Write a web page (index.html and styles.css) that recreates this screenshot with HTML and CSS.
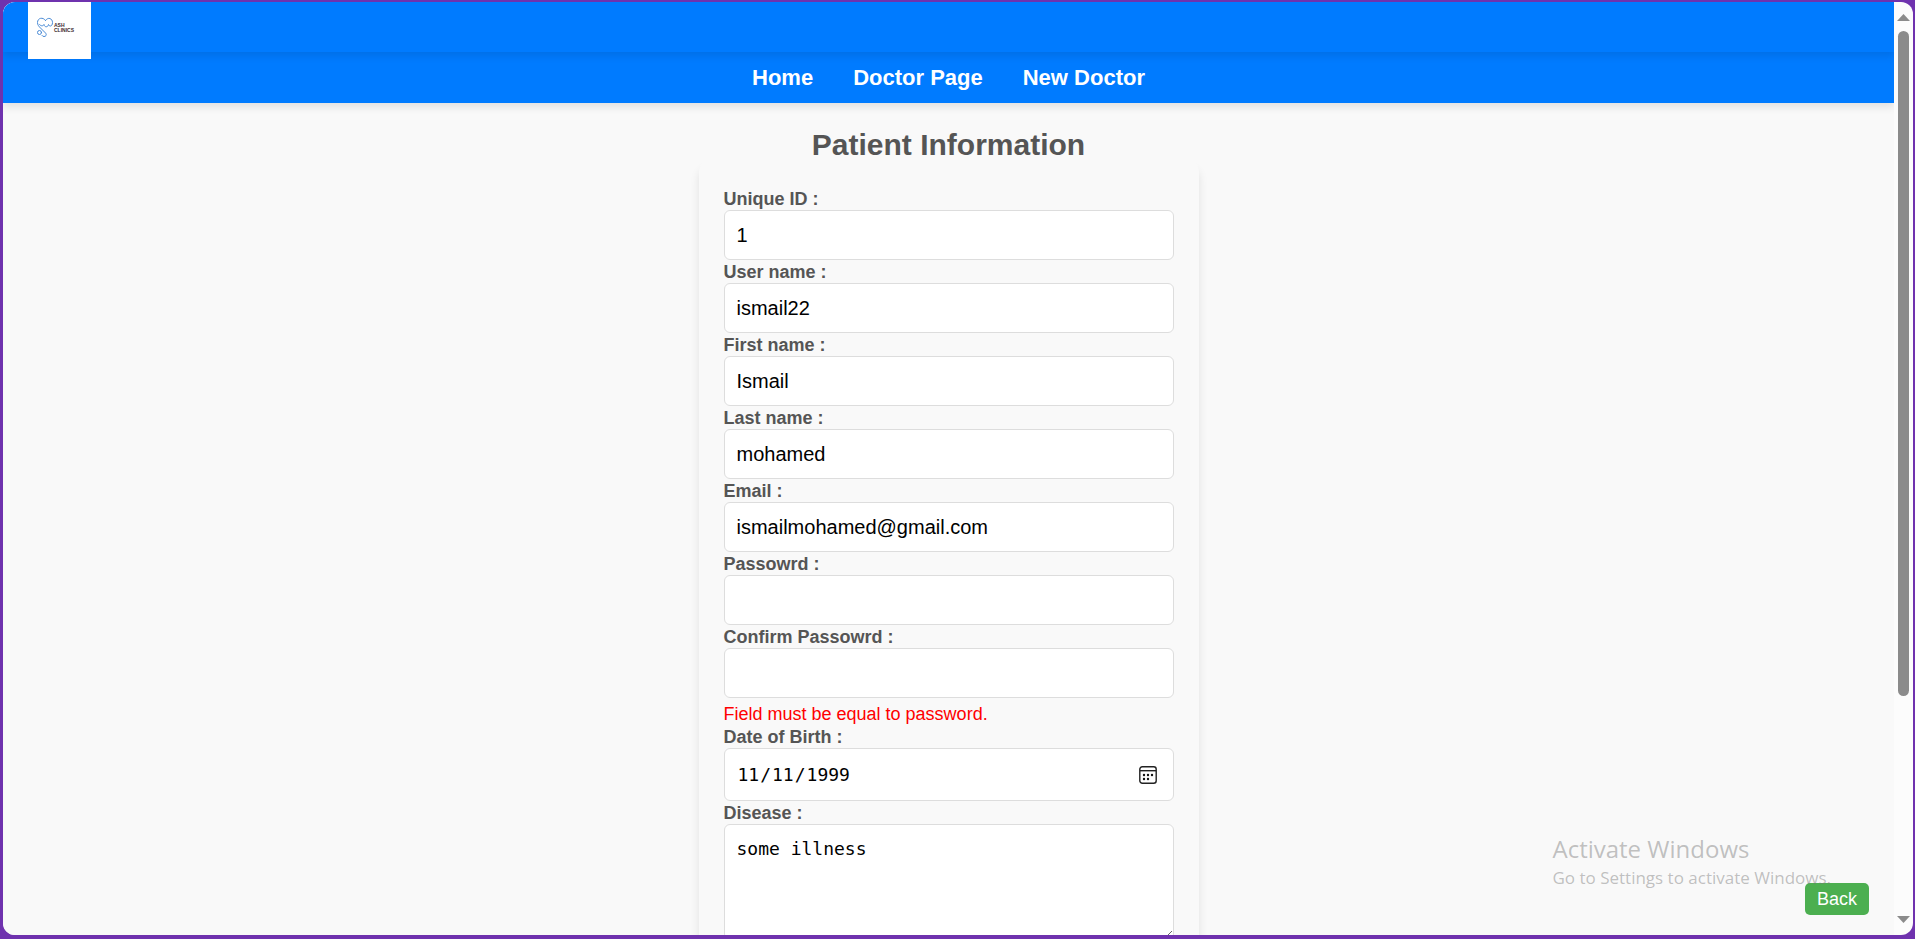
FILE: index.html
```html
<!DOCTYPE html>
<html lang="en-US">
<head>
<meta charset="utf-8">
<title>Patient Information</title>
<link rel="stylesheet" href="styles.css">
</head>
<body>
<div class="window">
  <div class="page">
    <header class="header">
      <a class="logo" href="#" aria-label="ASH Clinics">
        <svg viewBox="0 0 63 57" width="63" height="57">
          <g fill="none" stroke="#4a8bd6" stroke-width="1" stroke-linecap="round" stroke-linejoin="round">
            <path d="M17.500 18.500C15 14.500 9.500 16 9.500 20.500C9.500 23 11 24.500 12.500 26L17.500 31C20 34 15.500 36 14 33.500"/>
            <path d="M17.500 18.500C20 14.500 24.500 16.500 24.500 20.500C24.500 24.500 21.500 25 20.500 22.500C20 25.500 16.500 25.500 16 22.500C15 24.500 12.500 24 11.500 22.500"/>
            <circle cx="11.500" cy="30.500" r="2"/>
          </g>
          <text class="logo-text" x="26" y="25">ASH</text>
          <text class="logo-text" x="26" y="30">CLINICS</text>
        </svg>
      </a>
    </header>
    <nav class="nav">
      <a href="#">Home</a>
      <a href="#">Doctor Page</a>
      <a href="#">New Doctor</a>
    </nav>
    <main class="content">
      <h1 class="title">Patient Information</h1>
      <form class="card">
        <label for="uid">Unique ID :</label>
        <input class="field" id="uid" type="text" value="1">
        <label for="username">User name :</label>
        <input class="field" id="username" type="text" value="ismail22">
        <label for="first">First name :</label>
        <input class="field" id="first" type="text" value="Ismail">
        <label for="last">Last name :</label>
        <input class="field" id="last" type="text" value="mohamed">
        <label for="email">Email :</label>
        <input class="field" id="email" type="email" value="ismailmohamed@gmail.com">
        <label for="password">Passowrd :</label>
        <input class="field" id="password" type="password">
        <label for="confirm">Confirm Passowrd :</label>
        <input class="field" id="confirm" type="password" aria-describedby="confirm-error">
        <p class="error" id="confirm-error">Field must be equal to password.</p>
        <label for="dob">Date of Birth :</label>
        <div class="date">
          <input class="field field-date" id="dob" type="date" value="1999-11-11">
          <svg class="calendar" viewBox="0 0 18 18" width="18" height="18" aria-hidden="true">
            <rect x="0.800" y="0.800" width="16.400" height="16.400" rx="2.500" fill="none" stroke="#222" stroke-width="1.400"/>
            <path d="M1 4.700H17" stroke="#222" stroke-width="1.400"/>
            <g fill="#111">
              <circle cx="5" cy="9" r="1.200"/><circle cx="9" cy="9" r="1.200"/><circle cx="13" cy="9" r="1.200"/>
              <circle cx="5" cy="13" r="1.200"/><circle cx="9" cy="13" r="1.200"/>
            </g>
          </svg>
        </div>
        <label for="disease">Disease :</label>
        <textarea class="field field-area" id="disease">some illness</textarea>
      </form>
    </main>
    <button class="back" type="button">Back</button>
    <div class="watermark">
      <p class="watermark-title">Activate Windows</p>
      <p class="watermark-text">Go to Settings to activate Windows.</p>
    </div>
  </div>
  <div class="scrollbar" aria-hidden="true">
    <svg viewBox="0 0 13 7" width="13" height="7"><path d="M0 7L6.500 0L13 7Z" fill="#8b8b8b"/></svg>
    <div class="track"><div class="thumb"></div></div>
    <svg viewBox="0 0 13 7" width="13" height="7"><path d="M0 0L6.500 7L13 0Z" fill="#8b8b8b"/></svg>
  </div>
</div>
</body>
</html>
```
FILE: styles.css
```css
* {
  box-sizing: border-box;
}

body {
  margin: 0;
  height: 100vh;
  padding: 2px 2px 4px 3px;
  background: #6f32ae;
  font-family: "Liberation Sans", Arial, sans-serif;
  overflow: hidden;
}

.window {
  display: flex;
  height: 100%;
  border-radius: 12px;
  overflow: hidden;
  background: #fcfcfc;
}

.page {
  position: relative;
  flex: 1;
  overflow: hidden;
  background: #f9f9f9;
}

.header {
  position: relative;
  z-index: 1;
  height: 50px;
  padding-left: 25px;
  background: #007bff;
  box-shadow: 0 4px 8px rgba(0, 0, 0, 0.1);
}

.logo {
  display: block;
  width: 63px;
  background: #fff;
}

.logo svg {
  display: block;
}

.logo-text {
  font-size: 5px;
  font-weight: bold;
  fill: #3a2a30;
}

.nav {
  display: flex;
  justify-content: center;
  align-items: center;
  gap: 40px;
  height: 51px;
  background: #007bff;
  box-shadow: 0 4px 8px rgba(0, 0, 0, 0.1);
}

.nav a {
  color: #fff;
  font-size: 22px;
  line-height: 26px;
  font-weight: bold;
  text-decoration: none;
}

.content {
  padding-top: 26px;
}

.title {
  margin: 0;
  color: #555;
  font-size: 30px;
  line-height: 32px;
  text-align: center;
}

.card {
  display: flex;
  flex-direction: column;
  max-width: 500px;
  margin: 0 auto;
  padding: 26px 25px;
  border-radius: 10px;
  background: #f9f9f9;
  box-shadow: 0 8px 10px rgba(0, 0, 0, 0.1);
}

.card label {
  padding-top: 1px;
  color: #555;
  font-size: 18px;
  line-height: 22px;
  font-weight: bold;
}

.field {
  display: block;
  width: 100%;
  height: 50px;
  padding: 12px;
  border: 1px solid #ddd;
  border-radius: 6px;
  background: #fff;
  color: #000;
  font-family: inherit;
  font-size: 20px;
}

.error {
  margin: 5px 0 0;
  color: #f00;
  font-size: 18px;
  line-height: 22px;
}

.date {
  position: relative;
}

.field-date {
  height: 53px;
  font-family: "DejaVu Sans Mono", monospace;
  font-size: 18px;
}

.field-date::-webkit-calendar-picker-indicator {
  opacity: 0;
}

.calendar {
  position: absolute;
  top: 18px;
  right: 17px;
  pointer-events: none;
}

.field-area {
  height: 116px;
  padding-top: 13px;
  font-family: "DejaVu Sans Mono", monospace;
  font-size: 18px;
}

.back {
  position: absolute;
  right: 25px;
  bottom: 20px;
  height: 32px;
  padding: 0 12px;
  border: 0;
  border-radius: 5px;
  background: #4caf50;
  color: #fff;
  font-family: inherit;
  font-size: 18px;
}

.watermark {
  position: absolute;
  right: 63px;
  bottom: 44px;
  color: rgba(120, 120, 120, 0.45);
  font-family: "Open Sans", "Noto Sans", sans-serif;
  pointer-events: none;
}

.watermark p {
  margin: 0;
}

.watermark-title {
  font-size: 24px;
  line-height: 33px;
}

.watermark-text {
  font-size: 17px;
  line-height: 26px;
}

.scrollbar {
  display: flex;
  flex-direction: column;
  align-items: center;
  gap: 10px;
  width: 19px;
  padding: 12px 0;
}

.track {
  flex: 1;
}

.thumb {
  width: 11px;
  height: 76%;
  border-radius: 6px;
  background: #8b8b8b;
}
```
